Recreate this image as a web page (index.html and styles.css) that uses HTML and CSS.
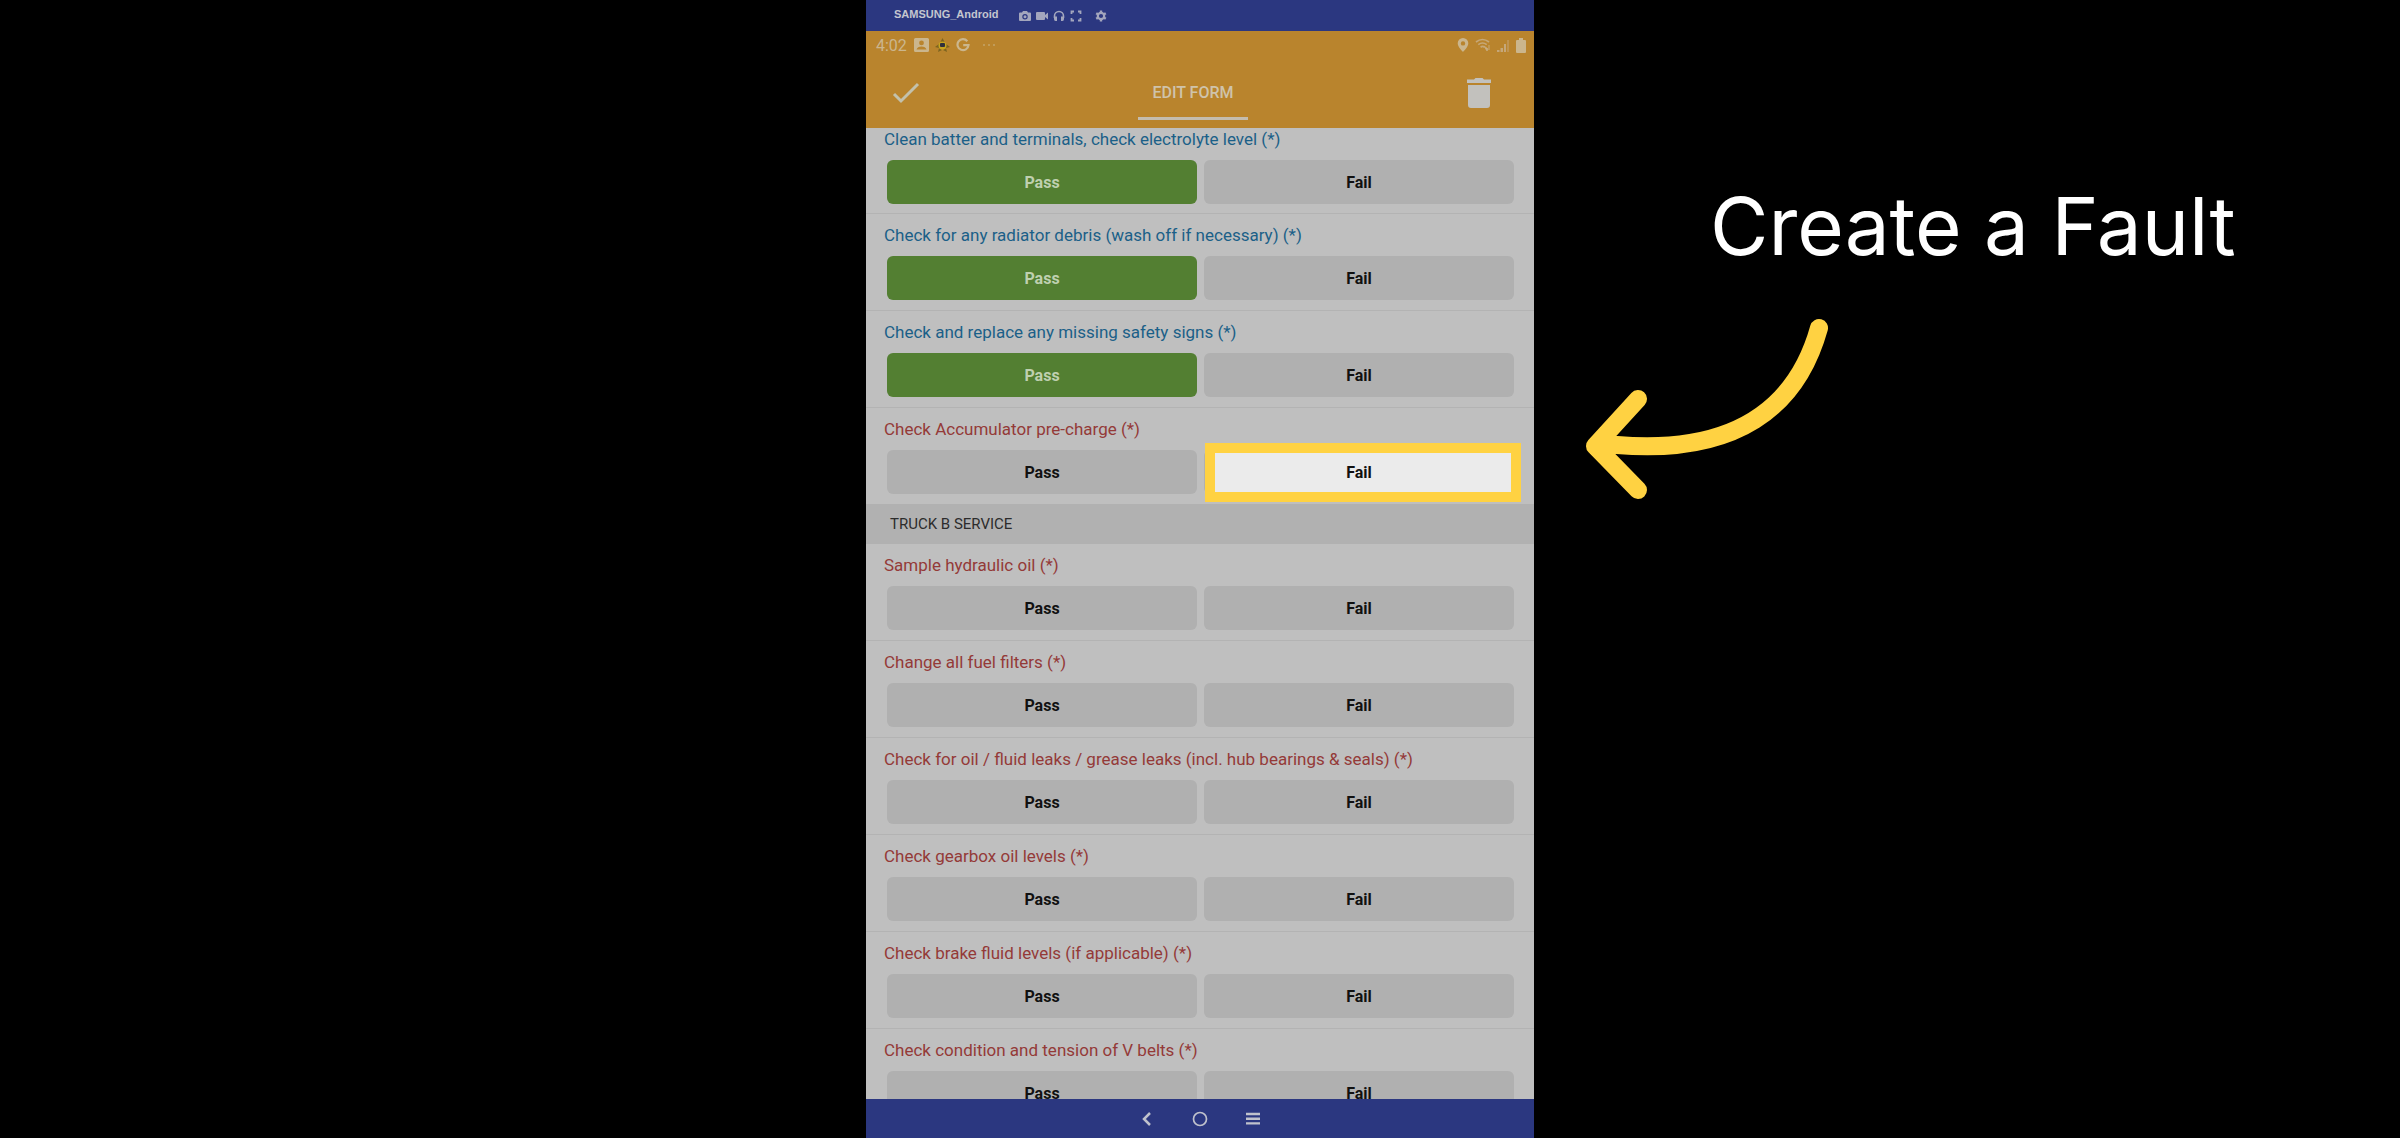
FILE: index.html
```html
<!DOCTYPE html>
<html lang="en">
<head>
<meta charset="utf-8">
<title>Create a Fault</title>
<link rel="stylesheet" href="styles.css">
</head>
<body>
<div class="stage">
  <main class="phone">
    <div class="mirror-bar">
      <span class="device">SAMSUNG_Android</span>
      <div class="mirror-tools">
        <svg width="12" height="12" viewBox="0 0 12 12"><path fill-rule="evenodd" d="M4 1h4l1 1.500h2q1 0 1 1V10q0 1-1 1H1q-1 0-1-1V3.500q0-1 1-1h2zM6 4a2.700 2.700 0 1 0 0 5.400A2.700 2.700 0 0 0 6 4z"/><circle cx="6" cy="6.700" r="1.500"/></svg>
        <svg width="12" height="12" viewBox="0 0 12 12"><path d="M1 2h7q1 0 1 1v2l3-2.500v7L9 7v2q0 1-1 1H1q-1 0-1-1V3q0-1 1-1z"/></svg>
        <svg width="12" height="12" viewBox="0 0 12 12"><path d="M1.500 8V6a4.500 4.500 0 0 1 9 0v2" fill="none" stroke="#a3a6bd" stroke-width="1.600"/><path d="M1 6.500h3v4.500H2.500Q1 11 1 9zM11 6.500H8v4.500h1.500Q11 11 11 9z"/></svg>
        <svg width="12" height="12" viewBox="0 0 12 12"><path d="M1.500 4V1.500H4M8 1.500h2.500V4M10.500 8v2.500H8M4 10.500H1.500V8" fill="none" stroke="#a3a6bd" stroke-width="1.800"/></svg>
        <svg class="gear" width="12" height="12" viewBox="0 0 12 12"><circle cx="6" cy="6" r="3.200" fill="none" stroke="#a3a6bd" stroke-width="2.200"/><path d="M6 .5v2M6 9.500v2M1.200 3.200l1.800 1.100M9 7.700l1.800 1.100M1.200 8.800L3 7.700M9 4.300l1.800-1.100" stroke="#a3a6bd" stroke-width="2.400"/></svg>
      </div>
    </div>

    <header class="app-head">
      <div class="status">
        <span class="clock">4:02</span>
        <svg width="15" height="14" viewBox="0 0 15 14"><path fill-rule="evenodd" d="M1.500 0h12Q15 0 15 1.500v11q0 1.500-1.500 1.500h-12Q0 14 0 12.500v-11Q0 0 1.500 0zM7.500 2.500a2.400 2.400 0 1 0 0 4.800 2.400 2.400 0 0 0 0-4.800zM2.500 11.500h10Q11.500 8.500 7.500 8.500t-5 3z"/></svg>
        <svg width="15" height="15" viewBox="0 0 15 15"><path d="M7.500 0l2 4h-4zM0 9l4-3v4zM15 9l-4-3v4zM3 14l1-4 3 2zM12 14l-1-4-3 2z" fill="#7d6420"/><circle cx="7.500" cy="7.500" r="4" fill="#c8a41e"/><rect x="5" y="5" width="5" height="4" rx="1" fill="#30313c"/></svg>
        <svg width="14" height="14" viewBox="0 0 14 14"><path d="M11.300 3.200A5.500 5.500 0 1 0 12.500 7.200H7.200" fill="none" stroke="#cbb68d" stroke-width="2.200"/></svg>
        <svg class="dots" width="14" height="4" viewBox="0 0 14 4"><circle cx="2" cy="2" r="1"/><circle cx="7" cy="2" r="1"/><circle cx="12" cy="2" r="1"/></svg>
        <div class="status-right">
          <svg width="12" height="14" viewBox="0 0 12 14"><path fill-rule="evenodd" d="M6 0a5.300 5.300 0 0 1 5.300 5.300C11.300 9 6 14 6 14S.7 9 .7 5.300A5.300 5.300 0 0 1 6 0zM6 3.200a2.200 2.200 0 1 0 0 4.400 2.200 2.200 0 0 0 0-4.400z"/></svg>
          <svg width="16" height="14" viewBox="0 0 16 14"><path d="M1 4q6.500-5 13 0M3.300 6.600q4.200-3.200 8.400 0M5.600 9.200q2-1.500 4 0" fill="none" stroke="#c6a878" stroke-width="1.700"/><path d="M9 8l3 5 1-2zM14 7v5" stroke="#c6a878" stroke-width="1"/></svg>
          <svg width="13" height="13" viewBox="0 0 13 13"><path d="M0 13v-2h2.500v2zM3.500 13V9H6v4zM7 13V5h2v8z" fill="#c5a77a"/><path d="M10 13V1h2v12z" fill="#bf9452"/></svg>
          <svg width="10" height="15" viewBox="0 0 10 15"><path d="M3 0h4v2h2q1 0 1 1v11q0 1-1 1H1q-1 0-1-1V3q0-1 1-1h2z"/></svg>
        </div>
      </div>
      <div class="actions">
        <button class="icon-button" aria-label="Save"><svg width="28" height="22" viewBox="0 0 28 22"><path d="M2 12l7 7L26 2" fill="none" stroke="#c3c1ac" stroke-width="3"/></svg></button>
        <h2 class="tab">EDIT FORM</h2>
        <button class="icon-button" aria-label="Delete"><svg width="26" height="32" viewBox="0 0 26 32"><path d="M8 2.500L9.500 1h7L18 2.500h7V6H1V2.500zM2 8h22v20q0 3-3 3H5q-3 0-3-3z"/></svg></button>
      </div>
    </header>

    <div class="checks">
      <section class="check done"><h3>Clean batter and terminals, check electrolyte level (*)</h3><div class="choices"><button class="choice on">Pass</button><button class="choice">Fail</button></div></section>
      <section class="check done"><h3>Check for any radiator debris (wash off if necessary) (*)</h3><div class="choices"><button class="choice on">Pass</button><button class="choice">Fail</button></div></section>
      <section class="check done"><h3>Check and replace any missing safety signs (*)</h3><div class="choices"><button class="choice on">Pass</button><button class="choice">Fail</button></div></section>
      <section class="check"><h3>Check Accumulator pre-charge (*)</h3><div class="choices"><button class="choice">Pass</button><button class="choice spotlight"><span>Fail</span></button></div></section>
      <h2 class="group">TRUCK B SERVICE</h2>
      <section class="check"><h3>Sample hydraulic oil (*)</h3><div class="choices"><button class="choice">Pass</button><button class="choice">Fail</button></div></section>
      <section class="check"><h3>Change all fuel filters (*)</h3><div class="choices"><button class="choice">Pass</button><button class="choice">Fail</button></div></section>
      <section class="check"><h3>Check for oil / fluid leaks / grease leaks (incl. hub bearings &amp; seals) (*)</h3><div class="choices"><button class="choice">Pass</button><button class="choice">Fail</button></div></section>
      <section class="check"><h3>Check gearbox oil levels (*)</h3><div class="choices"><button class="choice">Pass</button><button class="choice">Fail</button></div></section>
      <section class="check"><h3>Check brake fluid levels (if applicable) (*)</h3><div class="choices"><button class="choice">Pass</button><button class="choice">Fail</button></div></section>
      <section class="check"><h3>Check condition and tension of V belts (*)</h3><div class="choices"><button class="choice">Pass</button><button class="choice">Fail</button></div></section>
    </div>

    <nav class="nav">
      <button class="nav-button" aria-label="Back"><svg width="16" height="16" viewBox="0 0 16 16"><path d="M11 2L5 8l6 6" stroke-width="2.500"/></svg></button>
      <button class="nav-button" aria-label="Home"><svg width="16" height="16" viewBox="0 0 16 16"><circle cx="8" cy="8" r="6.500" stroke-width="1.700"/></svg></button>
      <button class="nav-button" aria-label="Menu"><svg width="16" height="16" viewBox="0 0 16 16"><path d="M1 3h14M1 7.700h14M1 12.400h14" stroke-width="2.400"/></svg></button>
    </nav>
  </main>

  <aside class="note">
    <h1>Create a Fault</h1>
    <svg class="arrow" width="246" height="184" viewBox="0 0 246 184"><path d="M234 10C212 89 152 137 32 127L12 127M53 81L10 128L53 172" fill="none" stroke="#ffd242" stroke-width="18" stroke-linecap="round" stroke-linejoin="round"/></svg>
  </aside>
</div>
</body>
</html>
```
FILE: styles.css
```css
* { box-sizing: border-box; }

body {
  margin: 0;
  background: #000;
  font-family: Roboto, sans-serif;
}

h1, h2, h3 { margin: 0; font-weight: 400; }

button {
  border: 0;
  padding: 0;
  background: none;
  font-family: inherit;
}

svg { display: block; fill: #cbb68d; }

.stage {
  display: grid;
  grid-template-columns: 1fr minmax(0, 668px) 1fr;
  height: 100vh;
}

.phone {
  grid-column: 2;
  display: flex;
  flex-direction: column;
  min-height: 0;
  background: #bfbfbf;
}

.mirror-bar {
  display: flex;
  flex: none;
  align-items: center;
  gap: 20px;
  height: 31px;
  padding: 0 28px;
  background: #2b3780;
}

.device {
  padding-bottom: 4px;
  font: bold 11px/16px "Liberation Sans", Arial, sans-serif;
  color: #c4c6cf;
}

.mirror-tools { display: flex; gap: 5px; }
.mirror-tools svg { fill: #a3a6bd; }
.gear { margin-left: 8px; }

.app-head {
  flex: none;
  height: 97px;
  background: #b9842d;
}

.status {
  display: flex;
  align-items: center;
  gap: 6px;
  height: 28px;
  padding: 0 8px 0 10px;
}

.clock { width: 32px; font-size: 16px; color: #cbb68d; }
.dots { margin-left: 6px; fill: #c5a469; }

.status-right {
  display: flex;
  align-items: center;
  gap: 6px;
  margin-left: auto;
}

.actions {
  display: flex;
  justify-content: space-between;
  height: 69px;
  padding: 0 42px 0 26px;
}

.icon-button { height: 68px; }
.icon-button svg { fill: #c2c1bd; }

.tab {
  align-self: flex-start;
  height: 61px;
  padding: 24px 14px 0;
  border-bottom: 3px solid #c4bcae;
  font-size: 16px;
  line-height: 20px;
  font-weight: 500;
  color: #cfc3ab;
}

.checks { flex: 1; min-height: 0; overflow: hidden; }

.check {
  height: 97px;
  padding: 10px 20px 0 18px;
  border-bottom: 1px solid #b3b3b3;
}

.check:first-child { height: 86px; padding-top: 0; }
.check:has(+ .group) { height: 96px; border-bottom: 0; }

.check h3 {
  height: 32px;
  font-size: 17px;
  line-height: 22px;
  color: #943a38;
}

.check.done h3 { color: #1b5f88; }

.choices {
  display: grid;
  grid-template-columns: 1fr 1fr;
  gap: 7px;
  padding-left: 3px;
}

.choice {
  position: relative;
  height: 44px;
  border-radius: 6px;
  background: #b0b0b0;
  font-size: 16px;
  font-weight: 700;
  color: #111;
}

.choice.on { background: #537f32; color: #bfd0b0; }

.spotlight::before {
  content: "";
  position: absolute;
  inset: -7px -7px -8px 1px;
  border: 10px solid #ffd242;
  background: #ebebeb;
}

.spotlight span { position: relative; }

.group {
  height: 40px;
  padding-left: 24px;
  background: #b1b1b1;
  font-size: 15px;
  line-height: 40px;
  color: #2c2c2c;
}

.nav {
  display: flex;
  flex: none;
  justify-content: center;
  align-items: center;
  gap: 37px;
  height: 39px;
  background: #2b3780;
}

.nav-button svg { fill: none; stroke: #c0c2cc; }

.note { padding: 172px 0 0 51px; }

.note h1 {
  padding-left: 125px;
  font-family: Inter, sans-serif;
  font-size: 80px;
  line-height: 108px;
  color: #fff;
  white-space: nowrap;
}

.arrow { margin-top: 38px; }
```
